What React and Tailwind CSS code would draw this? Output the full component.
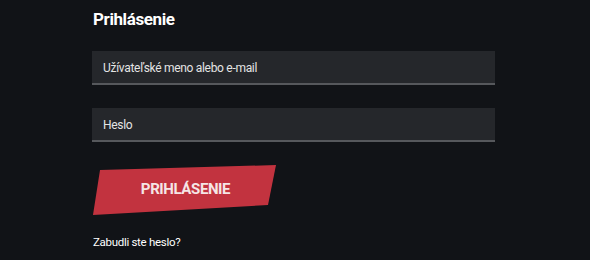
import React from 'react';

export default function App() {
  return (
    <div className="w-[590px] h-[260px] bg-[#111317] overflow-hidden font-['Roboto',sans-serif]">
      <div className="ml-[92px] w-[403px] flex flex-col">
        {/* Title */}
        <h2 className="mt-[7px] ml-[1px] text-[17px] font-bold text-white leading-[24px] tracking-[-0.4px]">
          Prihlásenie
        </h2>

        {/* Fields */}
        <div className="mt-[20px] flex flex-col gap-[23px]">
          <input
            type="text"
            placeholder="Užívateľské meno alebo e-mail"
            className="h-[34px] w-full bg-[#25272b] border-b-2 border-[#56585c] px-[11px] pt-[2px] text-[12px] tracking-[-0.3px] text-white placeholder:text-[#e4e4e4] outline-none"
          />
          <input
            type="password"
            placeholder="Heslo"
            className="h-[34px] w-full bg-[#25272b] border-b-2 border-[#56585c] px-[11px] pt-[2px] text-[12px] tracking-[-0.3px] text-white placeholder:text-[#e4e4e4] outline-none"
          />
        </div>

        {/* Submit */}
        <button
          type="button"
          className="mt-[23px] ml-[1px] w-[183px] h-[50px] bg-[#c2333f] text-[#f5e6e6] text-[15px] font-bold tracking-[-0.4px] [clip-path:polygon(7px_5px,183px_0,175px_40px,0_50px)] flex items-center justify-center pb-[2px] pl-[2px]"
        >
          PRIHLÁSENIE
        </button>

        {/* Forgot link */}
        <a href="#" className="mt-[18px] ml-[1px] text-[11.5px] tracking-[-0.3px] text-white leading-[18px]">
          Zabudli ste heslo?
        </a>
      </div>
    </div>
  );
}
